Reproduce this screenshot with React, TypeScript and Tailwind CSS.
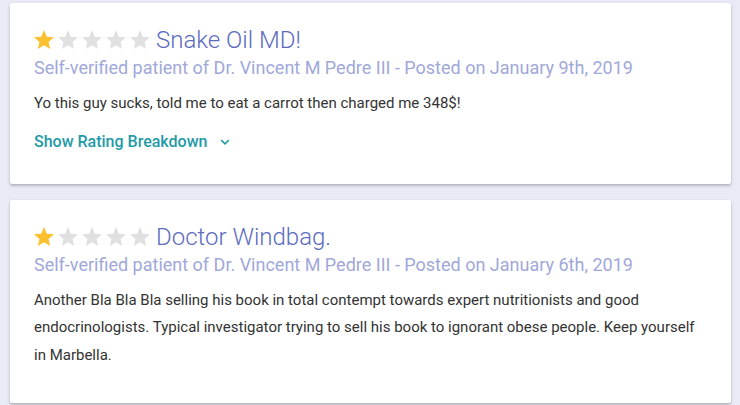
import React from 'react';

interface Review {
  title: string;
  rating: number;
  date: string;
  body: string;
  breakdown?: boolean;
}

const reviews: Review[] = [
  {
    title: 'Snake Oil MD!',
    rating: 1,
    date: 'January 9th, 2019',
    body: 'Yo this guy sucks, told me to eat a carrot then charged me 348$!',
    breakdown: true,
  },
  {
    title: 'Doctor Windbag.',
    rating: 1,
    date: 'January 6th, 2019',
    body:
      'Another Bla Bla Bla selling his book in total contempt towards expert nutritionists and good endocrinologists. Typical investigator trying to sell his book to ignorant obese people. Keep yourself in Marbella.',
  },
];

const Star = ({ filled }: { filled: boolean }) => (
  <svg viewBox="0 0 24 24" className={filled ? 'h-6 w-6 fill-[#fbc02d]' : 'h-6 w-6 fill-[#e0e0e0]'}>
    <path d="M12 17.27L18.18 21l-1.64-7.03L22 9.24l-7.19-.61L12 2 9.19 8.63 2 9.24l5.46 4.73L5.82 21z" />
  </svg>
);

const ReviewCard = ({ review }: { review: Review }) => (
  <div
    className={`bg-white rounded-[2px] shadow-[0_2px_3px_rgba(0,0,0,0.22),0_0_2px_rgba(0,0,0,0.08)] px-6 pt-[21px] ${
      review.breakdown ? 'pb-[30px]' : 'pb-[34px]'
    }`}
  >
    <div className="flex items-center h-8">
      <div className="flex -ml-[2px]">
        {[1, 2, 3, 4, 5].map((i) => (
          <Star key={i} filled={i <= review.rating} />
        ))}
      </div>
      <span className="ml-[4px] text-[24px] font-light text-[#5c6bc0] leading-8">{review.title}</span>
    </div>
    <div className="text-[18px] leading-6 text-[#9fa8da]">
      Self-verified patient of Dr. Vincent M Pedre III - Posted on {review.date}
    </div>
    <p className="mt-[10px] text-[15px] leading-[27.5px] text-[#333333]">{review.body}</p>
    {review.breakdown && (
      <button className="mt-[12px] flex items-center h-6 text-[16px] font-medium text-[#1e9aa8]">
        Show Rating Breakdown
        <svg viewBox="0 0 24 24" className="ml-[9px] h-[18px] w-[18px]" fill="none" stroke="#1e9aa8" strokeWidth="2">
          <path d="M7 9.5l5 5 5-5" />
        </svg>
      </button>
    )}
  </div>
);

export default function App() {
  return (
    <div className="min-h-[405px] w-[740px] bg-[#e8eaf6] pt-[3px] pl-[10px] pr-[9px] font-['Roboto',sans-serif] flex flex-col gap-4">
      {reviews.map((r) => (
        <ReviewCard key={r.title} review={r} />
      ))}
    </div>
  );
}
